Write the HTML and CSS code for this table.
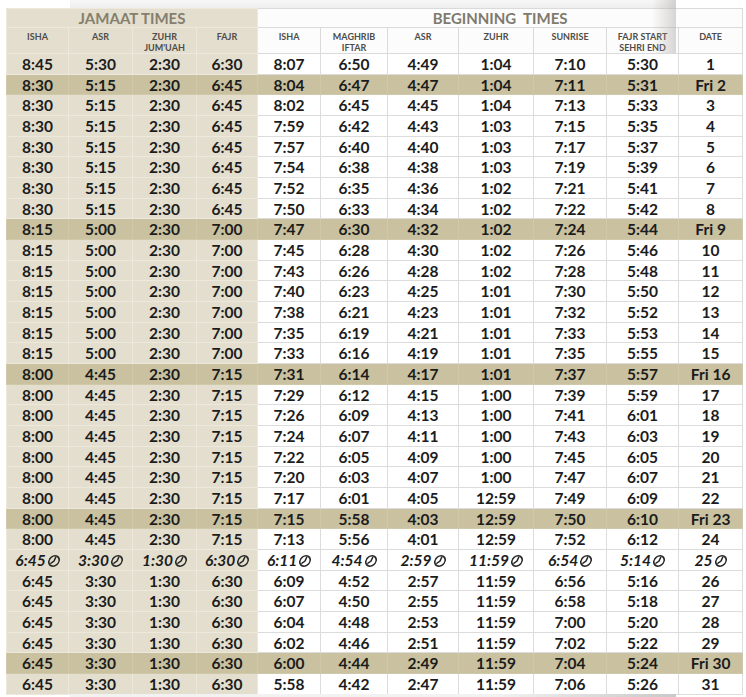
FILE: index.html
```html
<!DOCTYPE html>
<html>
<head>
<meta charset="utf-8">
<title>Prayer Times</title>
<link rel="stylesheet" href="styles.css">
</head>
<body>
<svg class="defs" width="0" height="0">
  <symbol id="clk" viewBox="0 0 10 10">
    <circle cx="5" cy="5" r="4.3" fill="none" stroke="currentColor" stroke-width="1.3"/>
    <path d="M5.8 1.9 L5 5 L2.9 6.8" fill="none" stroke="currentColor" stroke-width="1.3" stroke-linecap="round"/>
  </symbol>
</svg>
<div class="page">
  <div class="topband"></div>
  <table class="tt">
    <colgroup>
      <col style="width:62px"><col style="width:64px"><col style="width:64px"><col style="width:61px">
      <col style="width:63px"><col style="width:67px"><col style="width:71px"><col style="width:75px">
      <col style="width:73px"><col style="width:72px"><col style="width:64px">
    </colgroup>
    <thead>
      <tr class="title">
        <th colspan="4" class="j">JAMAAT TIMES</th>
        <th colspan="7" class="b">BEGINNING&nbsp; TIMES</th>
      </tr>
      <tr class="cols">
        <th class="j">ISHA</th><th class="j">ASR</th><th class="j">ZUHR<br>JUM'UAH</th><th class="j">FAJR</th>
        <th class="b">ISHA</th><th class="b">MAGHRIB<br>IFTAR</th><th class="b">ASR</th><th class="b">ZUHR</th><th class="b">SUNRISE</th><th class="b">FAJR START<br>SEHRI END</th><th class="b">DATE</th>
      </tr>
    </thead>
    <tbody id="rows"></tbody>
  </table>
  <div class="foldshadow"></div>
  <div class="bottomband"></div>
</div>
<script src="app.js"></script>
</body>
</html>
```
FILE: app.js
```js
var data = [
["8:45","5:30","2:30","6:30","8:07","6:50","4:49","1:04","7:10","5:30","1"],
["8:30","5:15","2:30","6:45","8:04","6:47","4:47","1:04","7:11","5:31","Fri 2"],
["8:30","5:15","2:30","6:45","8:02","6:45","4:45","1:04","7:13","5:33","3"],
["8:30","5:15","2:30","6:45","7:59","6:42","4:43","1:03","7:15","5:35","4"],
["8:30","5:15","2:30","6:45","7:57","6:40","4:40","1:03","7:17","5:37","5"],
["8:30","5:15","2:30","6:45","7:54","6:38","4:38","1:03","7:19","5:39","6"],
["8:30","5:15","2:30","6:45","7:52","6:35","4:36","1:02","7:21","5:41","7"],
["8:30","5:15","2:30","6:45","7:50","6:33","4:34","1:02","7:22","5:42","8"],
["8:15","5:00","2:30","7:00","7:47","6:30","4:32","1:02","7:24","5:44","Fri 9"],
["8:15","5:00","2:30","7:00","7:45","6:28","4:30","1:02","7:26","5:46","10"],
["8:15","5:00","2:30","7:00","7:43","6:26","4:28","1:02","7:28","5:48","11"],
["8:15","5:00","2:30","7:00","7:40","6:23","4:25","1:01","7:30","5:50","12"],
["8:15","5:00","2:30","7:00","7:38","6:21","4:23","1:01","7:32","5:52","13"],
["8:15","5:00","2:30","7:00","7:35","6:19","4:21","1:01","7:33","5:53","14"],
["8:15","5:00","2:30","7:00","7:33","6:16","4:19","1:01","7:35","5:55","15"],
["8:00","4:45","2:30","7:15","7:31","6:14","4:17","1:01","7:37","5:57","Fri 16"],
["8:00","4:45","2:30","7:15","7:29","6:12","4:15","1:00","7:39","5:59","17"],
["8:00","4:45","2:30","7:15","7:26","6:09","4:13","1:00","7:41","6:01","18"],
["8:00","4:45","2:30","7:15","7:24","6:07","4:11","1:00","7:43","6:03","19"],
["8:00","4:45","2:30","7:15","7:22","6:05","4:09","1:00","7:45","6:05","20"],
["8:00","4:45","2:30","7:15","7:20","6:03","4:07","1:00","7:47","6:07","21"],
["8:00","4:45","2:30","7:15","7:17","6:01","4:05","12:59","7:49","6:09","22"],
["8:00","4:45","2:30","7:15","7:15","5:58","4:03","12:59","7:50","6:10","Fri 23"],
["8:00","4:45","2:30","7:15","7:13","5:56","4:01","12:59","7:52","6:12","24"],
["6:45","3:30","1:30","6:30","6:11","4:54","2:59","11:59","6:54","5:14","25"],
["6:45","3:30","1:30","6:30","6:09","4:52","2:57","11:59","6:56","5:16","26"],
["6:45","3:30","1:30","6:30","6:07","4:50","2:55","11:59","6:58","5:18","27"],
["6:45","3:30","1:30","6:30","6:04","4:48","2:53","11:59","7:00","5:20","28"],
["6:45","3:30","1:30","6:30","6:02","4:46","2:51","11:59","7:02","5:22","29"],
["6:45","3:30","1:30","6:30","6:00","4:44","2:49","11:59","7:04","5:24","Fri 30"],
["6:45","3:30","1:30","6:30","5:58","4:42","2:47","11:59","7:06","5:26","31"]
];
var tb = document.getElementById("rows");
var html = "";
data.forEach(function (r, i) {
  var fri = r[10].indexOf("Fri") === 0;
  var change = i === 24;
  var cls = fri ? "fri" : (change ? "chg" : "");
  html += '<tr class="' + cls + '">';
  r.forEach(function (v, c) {
    var k = c < 4 ? "j" : "b";
    var content = v;
    if (change) content = v + '<svg class="clk" viewBox="0 0 10 10" width="12" height="12"><use href="#clk" x="0" y="0" width="10" height="10"/></svg>';
    html += '<td class="' + k + '">' + content + '</td>';
  });
  html += "</tr>";
});
tb.innerHTML = html;
```
FILE: styles.css
```css
html, body {
  margin: 0;
  padding: 0;
  background: #ffffff;
}
.defs {
  position: absolute;
  width: 0;
  height: 0;
}
.page {
  position: relative;
  width: 746px;
  height: 697px;
  overflow: hidden;
  padding-left: 6px;
  box-sizing: border-box;
}
.topband {
  height: 8px;
  margin-left: 64px;
  width: 606px;
  background: linear-gradient(#f7f7f7, #eeeeee);
}
.tt {
  border-collapse: collapse;
  table-layout: fixed;
  width: 736px;
  font-family: Lato, "Open Sans", sans-serif;
  color: #1c1c1c;
}
.tt th, .tt td {
  padding: 0;
  text-align: center;
  overflow: hidden;
  white-space: nowrap;
}
.tt .title th {
  height: 18px;
  font-size: 15px;
  font-weight: 700;
  color: #857f6e;
  line-height: 18px;
  vertical-align: middle;
}
.tt .title th.j {
  background: #e3dece;
  border: 1px solid #ece8dc;
}
.tt .title th.b {
  background: #fcfcfc;
  border: 1px solid #dadada;
  color: #7f7a6c;
}
.tt .cols th {
  height: 20px;
  font-size: 9px;
  font-weight: 700;
  color: #4e4d49;
  line-height: 11px;
  vertical-align: top;
  padding-top: 3px;
}
.tt .cols th.j {
  background: #e3dece;
  border: 1px solid #ece8dc;
}
.tt .cols th.b {
  background: #fcfcfc;
  border: 1px solid #dadada;
}
.tt td {
  height: 19.68px;
  font-size: 15.5px;
  font-weight: 700;
  line-height: 18px;
  vertical-align: middle;
}
.tt td.j {
  background: #e3dece;
  border: 1px solid #ece8dc;
}
.tt td.b {
  background: #ffffff;
  border: 1px solid #dcdcdc;
}
.tt tr.fri td {
  background: #c9c19f;
  border-color: #cfc8a9;
}
.tt tr.chg td {
  font-style: italic;
}
.clk {
  display: inline-block;
  width: 12px;
  height: 12px;
  margin-left: 2px;
  vertical-align: -1px;
  color: #262626;
  transform: skewX(-12deg);
}
.foldshadow {
  position: absolute;
  left: 652px;
  top: 0;
  width: 24px;
  height: 53px;
  background: linear-gradient(to right, rgba(180,175,170,0), rgba(170,165,160,0.45));
  pointer-events: none;
}
.bottomband {
  position: absolute;
  left: 70px;
  bottom: 0;
  width: 606px;
  height: 3px;
  background: linear-gradient(to right, #f2f2f2 70%, #c9c9c9);
}
```
